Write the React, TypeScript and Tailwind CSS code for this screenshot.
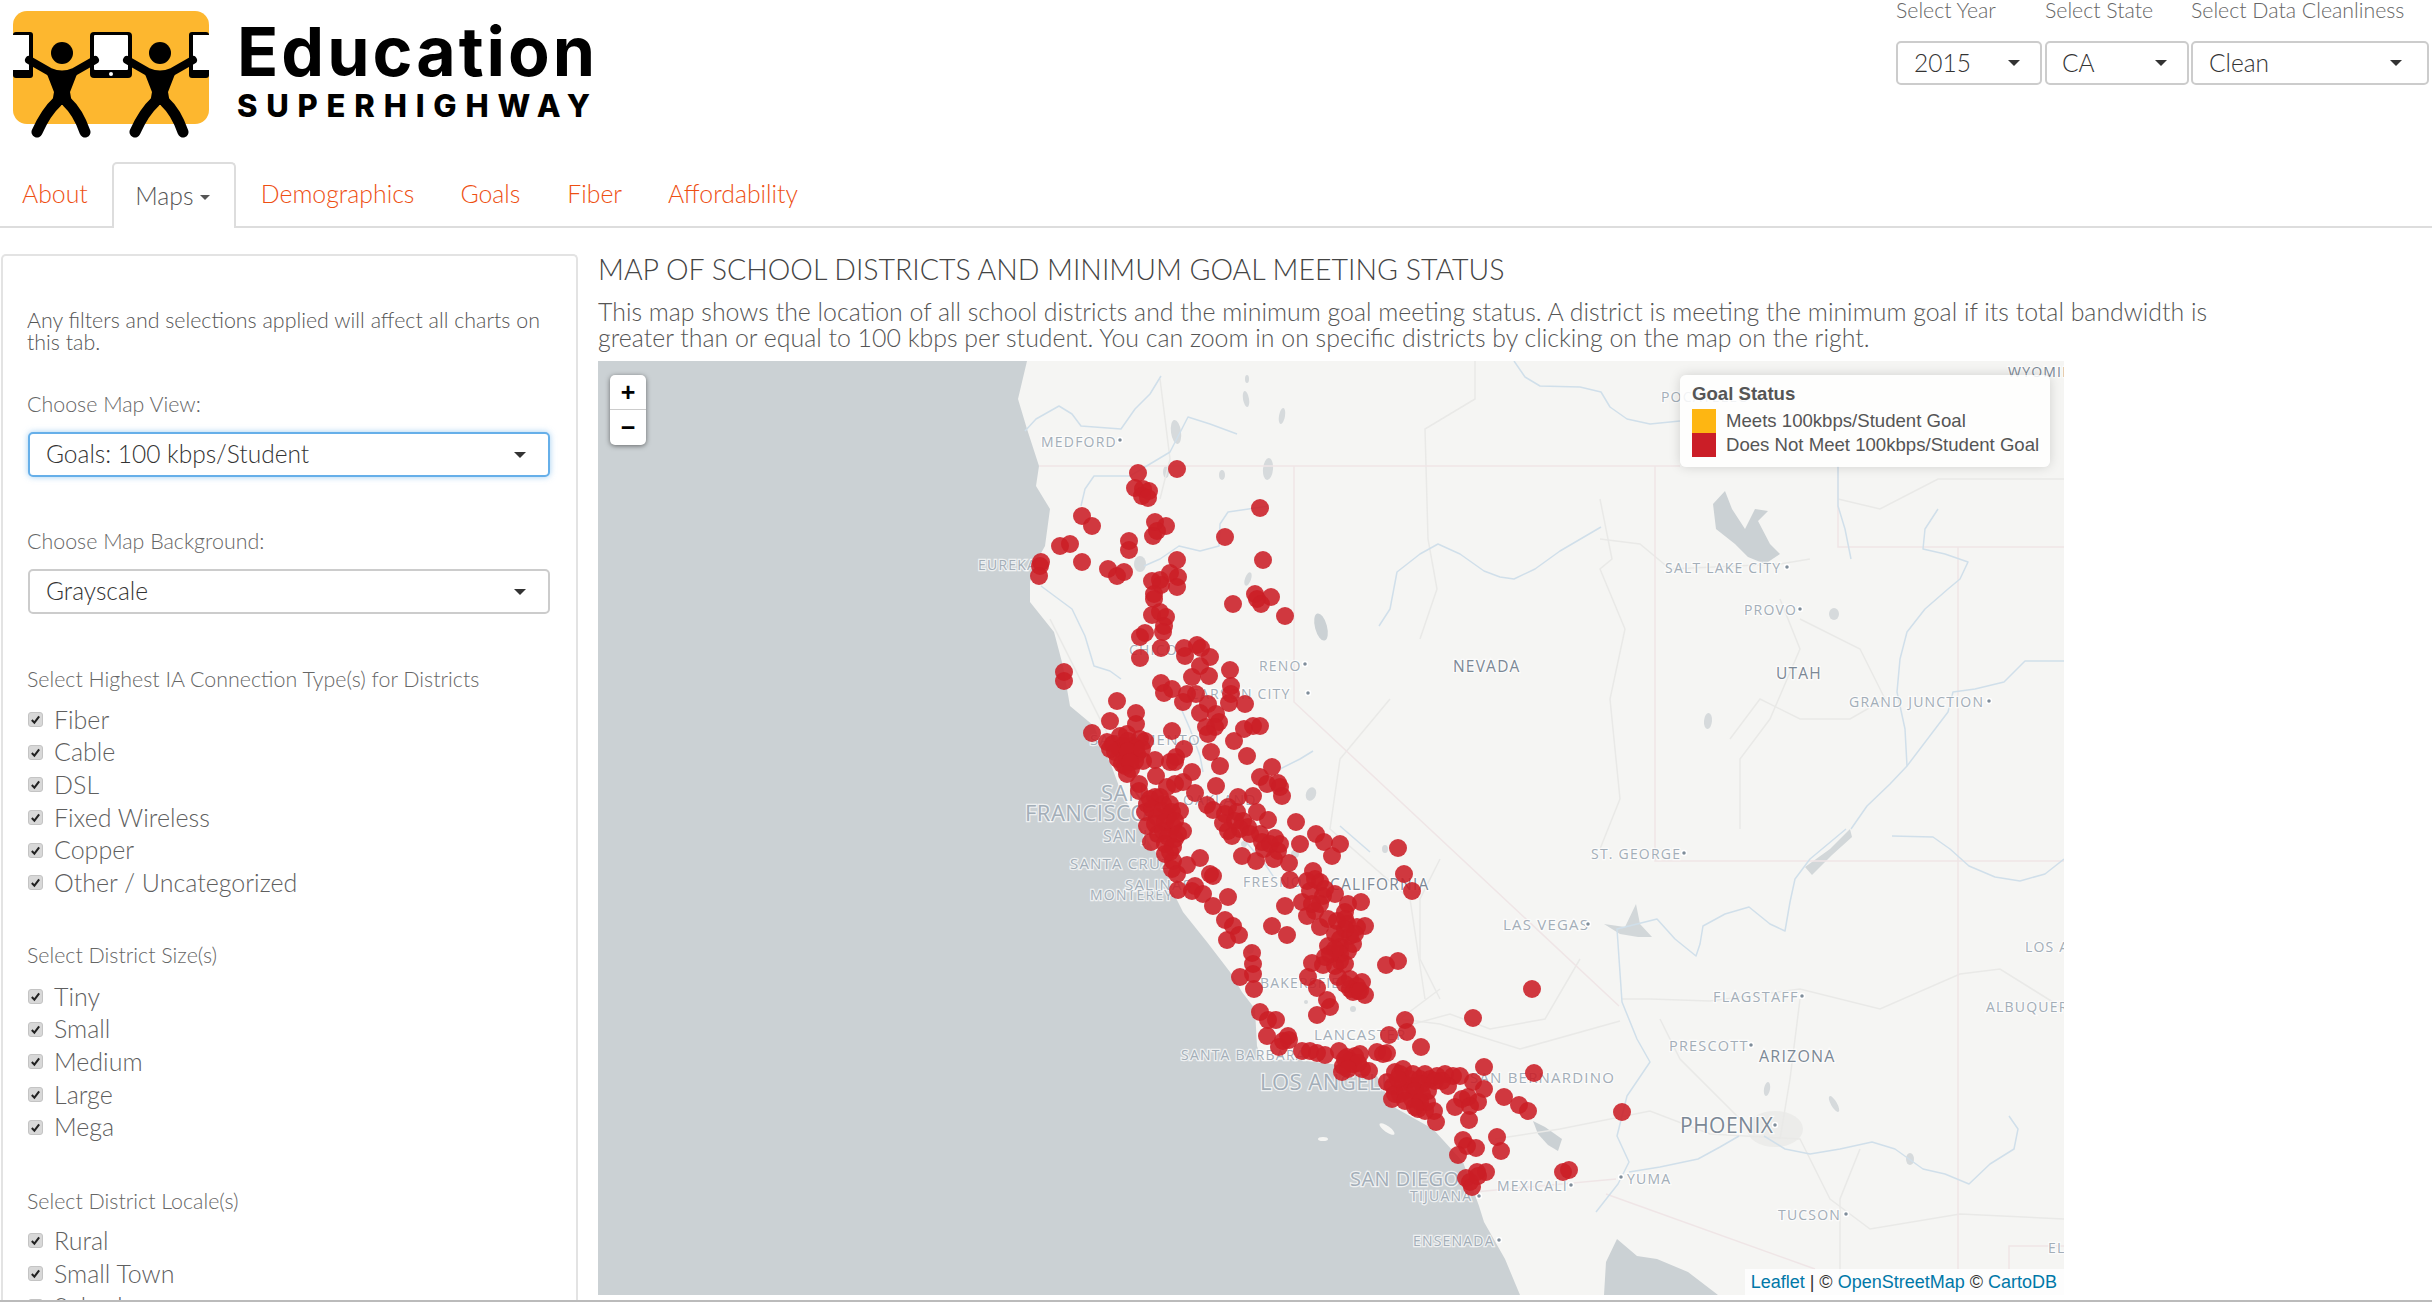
import { FC } from 'react'

const LATO = { fontFamily: 'Lato, sans-serif' }

// marker centres, in page pixels
const markers: number[][] = [
	[1138,474],[1177,470],[1135,489],[1143,490],[1149,492],[1142,497],[1148,499],[1260,509],[1082,517],[1092,527],
	[1155,523],[1166,527],[1157,532],[1153,537],[1225,538],[1129,542],[1129,551],[1060,547],[1070,545],[1041,563],
	[1040,567],[1039,577],[1082,563],[1108,570],[1117,577],[1124,573],[1177,561],[1263,561],[1170,574],[1178,578],
	[1152,582],[1160,581],[1161,586],[1177,588],[1154,595],[1154,600],[1233,605],[1255,595],[1257,600],[1261,605],
	[1271,598],[1285,617],[1152,616],[1160,613],[1166,618],[1164,627],[1163,633],[1145,634],[1140,638],[1161,649],
	[1140,659],[1184,649],[1185,657],[1197,646],[1201,649],[1210,658],[1200,667],[1230,671],[1192,678],[1209,677],
	[1064,673],[1064,682],[1161,684],[1172,690],[1164,694],[1187,695],[1196,695],[1183,703],[1231,687],[1231,695],
	[1229,704],[1245,705],[1208,705],[1200,714],[1216,715],[1117,702],[1136,714],[1110,722],[1219,723],[1206,728],
	[1215,728],[1208,735],[1244,730],[1253,727],[1260,727],[1172,732],[1092,734],[1136,725],
	[1107,743],[1120,737],[1127,735],[1115,753],[1123,747],[1132,747],[1140,740],[1145,742],[1127,760],[1137,755],
	[1125,767],[1131,770],[1143,762],[1155,761],[1184,750],[1176,758],[1170,763],[1175,763],[1211,753],[1234,742],
	[1247,757],[1220,767],[1272,768],[1260,778],[1267,785],[1278,784],[1282,797],[1280,788],[1156,777],[1192,773],
	[1139,785],[1139,792],[1183,783],[1175,785],[1167,788],[1216,787],[1195,794],[1253,797],[1238,798],
	[1155,798],[1147,805],[1145,813],[1163,805],[1180,812],[1157,818],[1168,817],[1147,827],[1173,827],[1183,832],
	[1163,832],[1175,840],[1151,843],[1170,853],[1173,862],[1187,866],[1200,859],[1207,806],[1213,811],[1228,808],
	[1237,813],[1223,824],[1232,837],[1243,822],[1248,828],[1257,813],[1268,821],[1260,835],[1275,839],[1264,850],
	[1278,852],[1274,860],[1242,857],[1256,862],[1289,864],[1296,823],[1300,845],[1316,835],[1324,843],[1340,845],
	[1332,857],[1398,849],[1404,875],[1412,892],[1210,875],[1213,877],[1178,891],[1192,892],[1195,887],[1203,895],
	[1213,907],[1228,898],[1225,921],[1233,927],[1239,936],[1227,941],[1272,927],[1287,936],[1285,907],[1290,881],
	[1252,954],[1253,965],[1253,975],[1240,978],
	[1313,872],[1307,882],[1320,883],[1310,892],[1323,897],[1335,895],[1302,903],[1315,912],[1307,917],[1320,928],
	[1348,905],[1361,903],[1345,913],[1337,922],[1347,925],[1357,928],[1365,927],[1328,920],[1350,937],[1340,940],
	[1353,945],[1328,947],[1340,948],[1348,952],[1340,962],[1335,967],[1323,966],[1312,964],[1338,978],[1350,980],
	[1362,983],[1353,993],[1365,996],[1357,987],[1386,966],[1398,962],[1308,978],[1317,989],[1327,1001],[1330,1008],
	[1317,1016],[1254,990],[1532,990],[1473,1019],[1405,1021],[1389,1036],[1407,1033],[1421,1048],[1260,1013],[1268,1021],
	[1276,1021],[1267,1037],[1288,1037],[1283,1042],[1279,1048],[1289,1041],[1302,1052],[1310,1052],[1317,1054],[1325,1056],
	[1339,1052],[1347,1058],[1355,1057],[1360,1055],[1343,1067],[1342,1073],[1353,1065],[1362,1070],[1369,1072],[1377,1053],
	[1383,1055],[1387,1054],[1387,1083],[1395,1073],[1403,1070],[1393,1087],[1403,1083],[1392,1100],[1400,1095],[1413,1075],
	[1425,1075],[1413,1087],[1422,1085],[1412,1100],[1422,1095],[1418,1110],[1427,1103],[1434,1112],[1436,1123],[1437,1077],
	[1445,1075],[1453,1077],[1460,1077],[1448,1087],[1473,1083],[1484,1068],[1484,1090],[1534,1074],[1504,1098],[1519,1106],
	[1528,1112],[1622,1113],[1462,1100],[1468,1098],[1478,1103],[1455,1108],[1470,1107],[1469,1121],[1463,1141],[1467,1147],
	[1476,1149],[1458,1156],[1497,1138],[1501,1152],[1466,1179],[1477,1173],[1486,1173],[1470,1183],[1472,1188],[1478,1177],
	[1563,1173],[1569,1171],
	// dense clusters
	[1113,745],[1120,750],[1128,742],[1136,749],[1118,760],[1128,752],[1135,762],[1122,765],[1130,763],[1142,750],[1110,750],[1127,775],
	[1150,800],[1160,798],[1170,805],[1152,810],[1162,812],[1172,813],[1155,825],[1165,823],[1175,822],[1158,835],[1168,838],[1178,835],
	[1165,845],[1173,848],[1165,855],[1172,870],[1177,875],
	[1225,815],[1235,822],[1240,830],[1250,835],[1228,832],[1262,843],[1270,845],[1280,845],
	[1315,880],[1325,890],[1312,905],[1320,905],[1345,920],[1355,935],[1345,930],[1340,955],[1335,935],[1345,965],[1350,990],[1345,985],
	[1358,992],[1360,992],[1330,955],[1335,950],[1325,958],
	[1400,1075],[1410,1080],[1420,1080],[1430,1080],[1395,1095],[1405,1092],[1415,1092],[1405,1102],[1398,1080],[1435,1082],[1442,1082],
	[1428,1092],[1420,1103],[1425,1112],[1415,1108],[1350,1062],[1345,1060],[1358,1064],[1348,1070],
]

// x, centre y, text, font size, dark
const places: [number, number, string, number, boolean?][] = [
	[1041,442,'MEDFORD',14],[978,565,'EUREKA',14],[1259,666,'RENO',14],[1190,694,'CARSON CITY',14],[1129,650,'CHICO',14],
	[1090,740,'SACRAMENTO',15],[1101,793,'SAN',22],[1025,813,'FRANCISCO',22],[1103,837,'SAN JOSE',16],[1070,864,'SANTA CRUZ',15],
	[1090,895,'MONTEREY',14],[1125,885,'SALINAS',15],[1243,882,'FRESNO',14],[1183,800,'OAKLAND',14],[1330,885,'CALIFORNIA',15.5,true],
	[1453,667,'NEVADA',15.5,true],[1776,674,'UTAH',15.5,true],[1665,568,'SALT LAKE CITY',14],[1744,610,'PROVO',14],[1849,702,'GRAND JUNCTION',14],
	[2008,372,'WYOMING',14,true],[1661,397,'POCATELLO',14],[1591,854,'ST. GEORGE',14],[1503,925,'LAS VEGAS',15],[2025,947,'LOS ALAMOS',14],
	[1986,1007,'ALBUQUERQUE',14],[1713,997,'FLAGSTAFF',14.5],[1669,1046,'PRESCOTT',14.5],[1759,1057,'ARIZONA',16,true],[1680,1126,'PHOENIX',21,true],
	[1627,1179,'YUMA',14],[1778,1215,'TUCSON',14],[1413,1241,'ENSENADA',14],[2048,1248,'EL PASO',14],[1497,1186,'MEXICALI',14],
	[1410,1196,'TIJUANA',14],[1350,1179,'SAN DIEGO',20],[1470,1078,'SAN BERNARDINO',15],[1260,1082,'LOS ANGELES',22],[1314,1035,'LANCASTER',15],
	[1260,983,'BAKERSFIELD',14],[1181,1055,'SANTA BARBARA',14],
]

const dots: number[][] = [
	[1120,441],[1305,665],[1308,694],[1787,568],[1800,610],[1989,702],[1684,854],[1588,925],[1802,997],[1751,1046],
	[1775,1126],[1621,1178],[1846,1215],[1499,1241],[1571,1186],[1479,1197],
]

const rivers: string[] = [
	'M1025 432L1036 420L1059 407L1072 415L1081 427L1121 430L1135 410L1150 395L1161 377',
	'M1081 507L1085 490L1094 477L1130 477L1170 453L1188 418L1210 425L1237 435',
	'M1144 567L1160 560L1179 547L1200 552L1219 547L1220 525L1228 513L1269 507',
	'M1041 587L1072 610L1085 637L1094 667L1110 672L1121 680',
	'M1379 627L1390 610L1397 573L1420 555L1438 545L1460 555L1484 572L1500 578L1514 580L1535 570L1560 552L1601 528',
	'M1514 362L1525 378L1540 387L1580 388L1601 393L1610 408L1627 420L1650 425L1680 422',
	'M1938 510L1925 530L1923 550L1945 555L1968 563L1960 580L1948 590L1925 610L1907 633L1900 660L1897 693L1905 730L1907 767L1890 785L1867 807L1851 830',
	'M2064 662L2025 662L2004 683L1975 690L1953 693L1948 713L1907 767',
	'M1838 467L1838 507L1845 530L1851 560',
	'M1846 830L1810 860L1795 880L1790 903L1785 932L1770 925L1749 908L1725 915L1703 927L1700 945L1696 957L1675 940L1657 920L1617 930L1622 1003L1637 1040L1650 1063L1627 1097L1617 1137L1629 1163L1618 1185L1596 1213',
	'M1764 1137L1785 1150L1810 1155L1840 1150L1872 1143L1895 1150L1923 1170L1945 1175L1969 1185L1990 1165L2014 1150L2018 1130L2009 1117',
	'M1739 1137L1720 1148L1698 1160L1660 1168L1629 1173',
	'M1892 837L1933 838L1950 850L1969 867L1995 878L2020 882L2045 875L2064 860',
	'M1180 707L1190 730L1200 757L1203 773',
	'M1246 843L1265 865L1275 880',
	'M1280 770L1300 760L1313 752',
	'M1340 827L1355 840L1370 853',
]

const roads: string[] = [
	'M1475 362L1475 400L1425 430L1428 540L1437 590L1420 640',
	'M1600 500L1612 560L1600 570L1625 630L1610 700L1620 800L1600 850',
	'M1600 540L1640 545L1670 570L1780 565L1810 560',
	'M1780 600L1800 650L1770 720L1740 760L1740 830',
	'M1800 620L1860 650L1885 700L1850 720L1800 720L1760 700L1730 740',
	'M1838 500L1880 510L1938 480L2000 480L2064 480',
	'M1580 960L1545 1020L1490 1030L1450 1015L1395 1030',
	'M1440 990L1400 1020L1440 1025L1520 1050L1620 1022',
	'M1622 1000L1650 1000L1710 1002L1800 990L1880 1010L1960 975L2000 970L2064 1010',
	'M1495 1140L1560 1130L1650 1112L1710 1135L1800 1140L1830 1200L1870 1230L1960 1215L2064 1220',
	'M1800 1000L1790 1080L1780 1140',
	'M1860 1150L1840 1200L1840 1290',
	'M1660 1020L1680 1060L1740 1120',
	'M1390 700L1340 760L1330 830L1410 900L1425 1000',
	'M1440 860L1420 900L1420 960L1440 1000',
	'M1050 620L1090 700L1110 740',
	'M1160 380L1170 460L1160 500',
]

const lakes: [number, number, number, number, number][] = [
	[1176,433,5,12,-8],[1166,473,3,6,0],[1246,400,3,8,-10],[1282,417,3,8,10],[1268,470,5,11,5],[1247,380,2,4,0],[1222,476,3,5,0],
	[1248,580,3,7,20],[1140,565,6,8,0],[1385,850,3,4,0],[1353,1010,3,3,0],[1244,845,3,3,0],[1250,950,4,5,0],[1834,615,5,6,0],
	[1708,722,4,8,5],[1767,1090,3,7,10],[1834,1105,3,9,-30],[1910,1160,4,6,0],[1295,855,4,4,0],
	[1311,795,5,7,20],[1306,1003,2,2,0],
]

const waterShape =
	'M596 362L1027 362L1018 400L1027 430L1039 467L1036 487L1050 510L1045 547L1036 563L1030 583L1030 603L1054 633L1063 667L1070 707L1094 727L1103 750L1110 763L1120 790L1137 823L1153 850L1167 867L1173 893L1183 913L1207 943L1230 973L1242 993L1255 1010L1257 1047L1262 1062L1290 1060L1340 1066L1377 1077L1392 1107L1433 1130L1463 1163L1479 1207L1484 1223L1505 1260L1520 1296L596 1296Z'

const Caret: FC = () => (
	<span className="w-0 h-0 border-x-[6px] border-x-transparent border-t-[6px] border-t-[#333]" />
)

const SelectBox: FC<{ label: string; className: string; focused?: boolean }> = ({ label, className, focused }) => (
	<div
		className={`flex items-center justify-between rounded-[5px] border-2 bg-white text-[#333] text-[24.5px] font-light ${className} ${
			focused ? 'border-[#66afe9] shadow-[0_0_6px_rgba(102,175,233,0.6)]' : 'border-[#ccc]'
		}`}
		style={LATO}
	>
		<span>{label}</span>
		<Caret />
	</div>
)

const Label: FC<{ text: string; className: string }> = ({ text, className }) => (
	<div className={`-ml-[1px] text-[21.4px] leading-[26px] text-[#666] font-light ${className}`}>{text}</div>
)

const Check: FC<{ label: string }> = ({ label }) => (
	<div className="flex items-center h-[32.7px]">
		<span className="flex items-center justify-center w-[15px] h-[15px] rounded-[3px] bg-[#d8d8d8] border border-[#c4c4c4]">
			<svg viewBox="0 0 12 12" className="w-[11px] h-[11px]">
				<path d="M2 6.5L4.8 9.5L10 2.5" fill="none" stroke="#222" strokeWidth="2.2" />
			</svg>
		</span>
		<span className="ml-[11px] text-[25px] text-[#5f5f5f] font-light">{label}</span>
	</div>
)

const Figure: FC<{ x: number }> = ({ x }) => (
	<g transform={`translate(${x} 0)`} fill="#000" stroke="#000" strokeLinecap="round" strokeLinejoin="round">
		<ellipse cx="62" cy="53" rx="11" ry="11" stroke="none" />
		<path d="M29 60L50 72Q62 77 74 72L95 60" fill="none" strokeWidth="8" />
		<path d="M48 74L76 74L69 92L71 104L53 104L55 92Z" strokeWidth="2" />
		<path d="M57 102Q46 112 37 132" fill="none" strokeWidth="11" />
		<path d="M67 102Q78 112 85 132" fill="none" strokeWidth="11" />
	</g>
)

const Logo: FC = () => (
	<div className="flex items-start pl-[13px] pt-[11px]">
		<svg viewBox="13 11 197 127" className="w-[197px] h-[127px] shrink-0">
			<rect x="13" y="11" width="196" height="113" rx="14" fill="#fdb72f" />
			<rect x="13" y="32" width="20" height="46" rx="3" fill="#000" />
			<rect x="13" y="35" width="16" height="35" fill="#fff" />
			<rect x="90" y="32" width="42" height="46" rx="4" fill="#000" />
			<rect x="94" y="35" width="34" height="35" rx="1" fill="#fff" />
			<circle cx="111" cy="74" r="2" fill="#fff" />
			<rect x="189" y="32" width="20" height="46" rx="3" fill="#000" />
			<rect x="193" y="35" width="16" height="35" fill="#fff" />
			<Figure x={0} />
			<Figure x={98} />
		</svg>
		<div className="ml-[27px] flex flex-col" style={{ fontFamily: 'Inter, sans-serif' }}>
			<span className="text-[68px] leading-[68px] font-bold text-black tracking-[3px] mt-[6px]">Education</span>
			<span className="text-[31px] leading-[31px] font-extrabold text-black tracking-[8.8px] mt-[5px]">SUPERHIGHWAY</span>
		</div>
	</div>
)

const MapArt: FC = () => (
	<svg viewBox="598 362 1466 934" className="absolute inset-0 w-full h-full">
		<rect x="598" y="362" width="1466" height="934" fill="#f5f5f3" />
		<path d={waterShape} fill="#cbd1d4" />
		<path d="M1604 1296L1606 1263L1617 1240L1637 1257L1657 1260L1688 1273L1718 1296Z" fill="#cbd1d4" />
		<path d="M1713 505L1725 492L1732 510L1745 530L1755 510L1768 512L1758 522L1770 545L1780 555L1765 565L1748 558L1735 545L1716 530Z" fill="#cbd1d4" />
		<path d="M1533 1122L1545 1128L1562 1140L1558 1152L1548 1146L1538 1135Z" fill="#cbd1d4" />
		<path d="M1604 925L1625 928L1636 905L1640 925L1652 938L1638 938L1620 935Z" fill="#d2d7d9" />
		<path d="M1805 868L1830 850L1850 830L1852 838L1832 856L1812 876Z" fill="#d2d7d9" />
		<ellipse cx="1321" cy="628" rx="6" ry="14" fill="#cbd1d4" transform="rotate(-15 1321 628)" />
		{lakes.map(([cx, cy, rx, ry, r], i) => (
			<ellipse key={i} cx={cx} cy={cy} rx={rx} ry={ry} fill="#d6dadc" transform={`rotate(${r} ${cx} ${cy})`} />
		))}
		<ellipse cx="1387" cy="1130" rx="9" ry="3" fill="#f5f5f3" transform="rotate(35 1387 1130)" />
		<ellipse cx="1323" cy="1140" rx="5" ry="2" fill="#f5f5f3" />
		<ellipse cx="1775" cy="1130" rx="28" ry="18" fill="#ececea" />

		{roads.map((d, i) => (
			<path key={i} d={d} fill="none" stroke="#e9e9e7" strokeWidth="1.5" />
		))}
		<g fill="none" stroke="#efe5e6" strokeWidth="1.5">
			<path d="M1039 467L1680 467M1655 467L1655 862L2064 862M1838 467L1838 548L2064 548M1958 548L1958 1270" />
			<path d="M1294 467L1294 703L1619 1007" />
			<path d="M1474 1193L1616 1180M1606 1195L1815 1270M2009 1270L2009 1247L2064 1247" />
		</g>
		{rivers.map((d, i) => (
			<path key={i} d={d} fill="none" stroke="#d0dfea" strokeWidth="1.5" strokeLinejoin="round" />
		))}

		{places.map(([x, y, name, size, dark]) => (
			<text
				key={name}
				x={x}
				y={y}
				dominantBaseline="central"
				fontSize={size}
				letterSpacing={size > 16 ? 0.5 : 1.2}
				fill={dark ? '#7b8895' : '#a3aeb8'}
				stroke="#ffffff"
				strokeOpacity="0.7"
				strokeWidth="2.5"
				paintOrder="stroke"
				style={{ fontFamily: '"Open Sans", sans-serif' }}
			>
				{name}
			</text>
		))}
		{dots.map(([cx, cy], i) => (
			<circle key={i} cx={cx} cy={cy} r="2.5" fill="#7f8d9a" stroke="#fff" strokeWidth="1.5" />
		))}

		{markers.map(([cx, cy], i) => (
			<circle key={i} cx={cx} cy={cy} r="9" fill="#cb1e26" fillOpacity="0.88" />
		))}
	</svg>
)

const App: FC = () => {
	const arial = { fontFamily: '"Liberation Sans", Arial, sans-serif' }

	return (
		<div className="w-[2432px] h-[1302px] overflow-hidden bg-white flex flex-col" style={LATO}>
			{/* top: logo and global selects */}
			<div className="flex justify-between h-[162px] shrink-0">
				<Logo />
				<div className="flex items-start pr-[3px]">
					<div className="w-[149px] shrink-0">
						<div className="text-[21.3px] leading-[21px] text-[#666] font-light">Select Year</div>
						<SelectBox label="2015" className="w-[146px] h-[44px] mt-[20px] pl-[16px] pr-[20px]" />
					</div>
					<div className="w-[146px] shrink-0">
						<div className="text-[21.3px] leading-[21px] text-[#666] font-light">Select State</div>
						<SelectBox label="CA" className="w-[144px] h-[44px] mt-[20px] pl-[15px] pr-[20px]" />
					</div>
					<div className="w-[238px] shrink-0">
						<div className="text-[21.3px] leading-[21px] text-[#666] font-light">Select Data Cleanliness</div>
						<SelectBox label="Clean" className="w-[238px] h-[44px] mt-[20px] pl-[16px] pr-[25px]" />
					</div>
				</div>
			</div>

			{/* tabs */}
			<div className="flex items-stretch h-[66px] shrink-0 border-b-2 border-[#ddd] text-[24.8px] font-light text-[#ee4f12]">
				<span className="ml-[22px] flex items-center">About</span>
				<div className="ml-[24px] w-[124px] h-[66px] pr-[2px] flex items-center justify-center rounded-t-[5px] border-2 border-b-0 border-[#ddd] bg-white text-[#555]">
					Maps
					<span className="ml-[7px] mt-[3px] w-0 h-0 border-x-[5px] border-x-transparent border-t-[5px] border-t-[#555]" />
				</div>
				<span className="ml-[25px] flex items-center">Demographics</span>
				<span className="ml-[46px] flex items-center">Goals</span>
				<span className="ml-[47px] flex items-center">Fiber</span>
				<span className="ml-[46px] flex items-center">Affordability</span>
			</div>

			<div className="flex flex-1 min-h-0 border-b-2 border-[#bbb]">
				{/* filters */}
				<div className="ml-[1px] mt-[26px] w-[577px] shrink-0 rounded-t-[5px] border-2 border-b-0 border-[#e3e3e3] px-[25px] overflow-hidden">
					<p className="-ml-[1px] mt-[53px] text-[21.4px] leading-[22px] text-[#555] font-light">
						Any filters and selections applied will affect all charts on this tab.
					</p>
					<Label text="Choose Map View:" className="mt-[38px]" />
					<SelectBox label="Goals: 100 kbps/Student" focused className="w-[522px] h-[45px] mt-[15px] pl-[16px] pr-[22px]" />
					<Label text="Choose Map Background:" className="mt-[51px]" />
					<SelectBox label="Grayscale" className="w-[522px] h-[45px] mt-[15px] pl-[16px] pr-[22px]" />

					<Label text="Select Highest IA Connection Type(s) for Districts" className="mt-[52px]" />
					<div className="mt-[11px]">
						<Check label="Fiber" />
						<Check label="Cable" />
						<Check label="DSL" />
						<Check label="Fixed Wireless" />
						<Check label="Copper" />
						<Check label="Other / Uncategorized" />
					</div>
					<Label text="Select District Size(s)" className="mt-[43px]" />
					<div className="mt-[12px]">
						<Check label="Tiny" />
						<Check label="Small" />
						<Check label="Medium" />
						<Check label="Large" />
						<Check label="Mega" />
					</div>
					<Label text="Select District Locale(s)" className="mt-[44px]" />
					<div className="mt-[11px]">
						<Check label="Rural" />
						<Check label="Small Town" />
						<Check label="Suburban" />
					</div>
				</div>

				{/* map */}
				<div className="ml-[20px] flex-1 min-w-0">
					<h2 className="mt-[25px] text-[28.5px] leading-[32px] font-light text-[#444]">
						MAP OF SCHOOL DISTRICTS AND MINIMUM GOAL MEETING STATUS
					</h2>
					<p className="mt-[13px] w-[1660px] text-[24.9px] leading-[26px] font-light text-[#555]">
						This map shows the location of all school districts and the minimum goal meeting status. A district is meeting the minimum goal if its total bandwidth is
						greater than or equal to 100 kbps per student. You can zoom in on specific districts by clicking on the map on the right.
					</p>
					<div className="relative mt-[11px] w-[1466px] h-[934px] overflow-hidden">
						<MapArt />
						<div className="absolute left-[12px] top-[14px] w-[36px] rounded-[5px] bg-white shadow-[0_1px_5px_rgba(0,0,0,0.5)] text-black font-bold" style={arial}>
							<div className="h-[35px] flex items-center justify-center text-[25px] leading-none border-b border-[#ccc]">+</div>
							<div className="h-[35px] flex items-center justify-center text-[25px] leading-none">−</div>
						</div>
						<div className="absolute left-[1082px] top-[14px] w-[370px] h-[92px] rounded-[6px] bg-white/85 shadow-[0_0_12px_rgba(0,0,0,0.15)] text-[18.6px] leading-[24px] text-[#555] pl-[12px] pt-[7px]" style={arial}>
							<div className="font-bold h-[24px] leading-[24px]">Goal Status</div>
							<div className="mt-[3px] flex items-center h-[24px]">
								<span className="w-[24px] h-[24px] bg-[#feb612]" />
								<span className="ml-[10px]">Meets 100kbps/Student Goal</span>
							</div>
							<div className="flex items-center h-[24px]">
								<span className="w-[24px] h-[24px] bg-[#cb1e27]" />
								<span className="ml-[10px]">Does Not Meet 100kbps/Student Goal</span>
							</div>
						</div>
						<div className="absolute right-0 bottom-0 h-[26px] pl-[6px] pr-[7px] flex items-center bg-white/80 text-[18px] text-[#333] whitespace-pre" style={arial}>
							<span className="text-[#0078a8]">Leaflet</span> | © <span className="text-[#0078a8]">OpenStreetMap</span> © <span className="text-[#0078a8]">CartoDB</span>
						</div>
					</div>
				</div>
			</div>
		</div>
	)
}

export default App
